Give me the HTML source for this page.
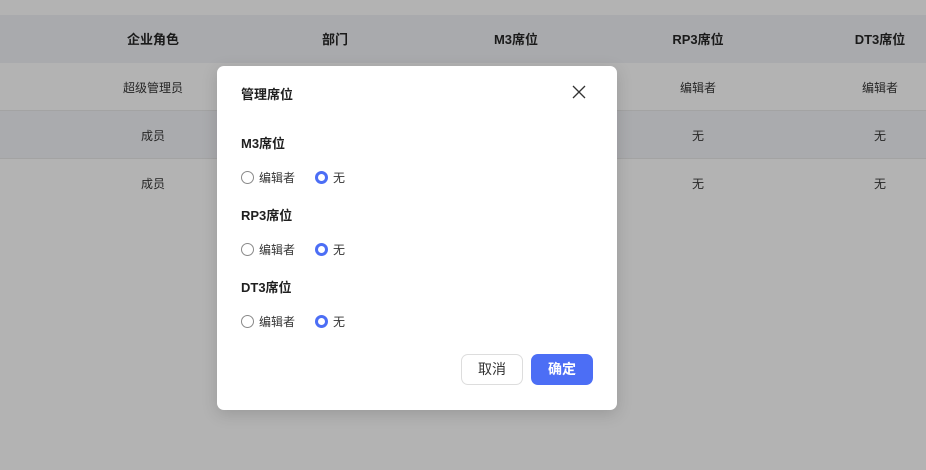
<!DOCTYPE html>
<html><head><meta charset="utf-8"><style>
*{margin:0;padding:0;box-sizing:border-box}
body{width:926px;height:470px;background:#b3b3b3;font-family:"Liberation Sans","Noto Sans CJK SC",sans-serif;position:relative;overflow:hidden;font-size:12px;color:#262626}
.row{position:absolute;left:0;width:926px;height:48px}
.c{position:absolute;top:1px;height:48px;line-height:48px;width:182px;text-align:center;transform:translateX(-50%)}
.hd{top:15px;background:#a9aaad;font-weight:bold;color:#1a1a1a;font-size:13px}
.r1{top:63px;border-bottom:1px solid #a3a3a3}
.r2{top:111px;background:#aaabae;border-bottom:1px solid #a3a3a3}
.r3{top:159px}
.modal{position:absolute;left:217px;top:66px;width:400px;height:344px;background:#fff;border-radius:7px;box-shadow:0 4px 16px rgba(0,0,0,.15)}
.t{position:absolute;left:24px;font-weight:bold;font-size:13px;color:#1f1f1f}
.rad{position:absolute;left:24px;display:flex;align-items:center;font-size:12px;color:#333}
.o{width:13px;height:13px;border:1px solid #8a8a8a;border-radius:50%;margin-right:5px}
.s{width:13px;height:13px;border:3.5px solid #4c6ef5;border-radius:50%;margin-right:5px;margin-left:20px}
.btn{position:absolute;top:288px;height:31px;border-radius:7px;line-height:31px;text-align:center;font-size:14px}
</style></head><body>
<div class="row hd"><div class="c" style="left:153px">企业角色</div><div class="c" style="left:335px">部门</div><div class="c" style="left:516px">M3席位</div><div class="c" style="left:698px">RP3席位</div><div class="c" style="left:880px">DT3席位</div></div>
<div class="row r1"><div class="c" style="left:153px">超级管理员</div><div class="c" style="left:698px">编辑者</div><div class="c" style="left:880px">编辑者</div></div>
<div class="row r2"><div class="c" style="left:153px">成员</div><div class="c" style="left:698px">无</div><div class="c" style="left:880px">无</div></div>
<div class="row r3"><div class="c" style="left:153px">成员</div><div class="c" style="left:698px">无</div><div class="c" style="left:880px">无</div></div>
<div class="modal">
<div class="t" style="top:18px">管理席位</div>
<svg style="position:absolute;left:355px;top:19px" width="14" height="14" viewBox="0 0 14 14"><path d="M1 1L13 13M13 1L1 13" stroke="#333" stroke-width="1.3"/></svg>
<div class="t" style="top:67px">M3席位</div>
<div class="rad" style="top:103px"><span class="o"></span>编辑者<span class="s"></span>无</div>
<div class="t" style="top:139px">RP3席位</div>
<div class="rad" style="top:175px"><span class="o"></span>编辑者<span class="s"></span>无</div>
<div class="t" style="top:211px">DT3席位</div>
<div class="rad" style="top:247px"><span class="o"></span>编辑者<span class="s"></span>无</div>
<div class="btn" style="left:244px;width:62px;border:1px solid #ddd;color:#333;line-height:29px">取消</div>
<div class="btn" style="left:314px;width:62px;background:#4c6ef5;color:#fff;font-weight:bold">确定</div>
</div>
</body></html>
